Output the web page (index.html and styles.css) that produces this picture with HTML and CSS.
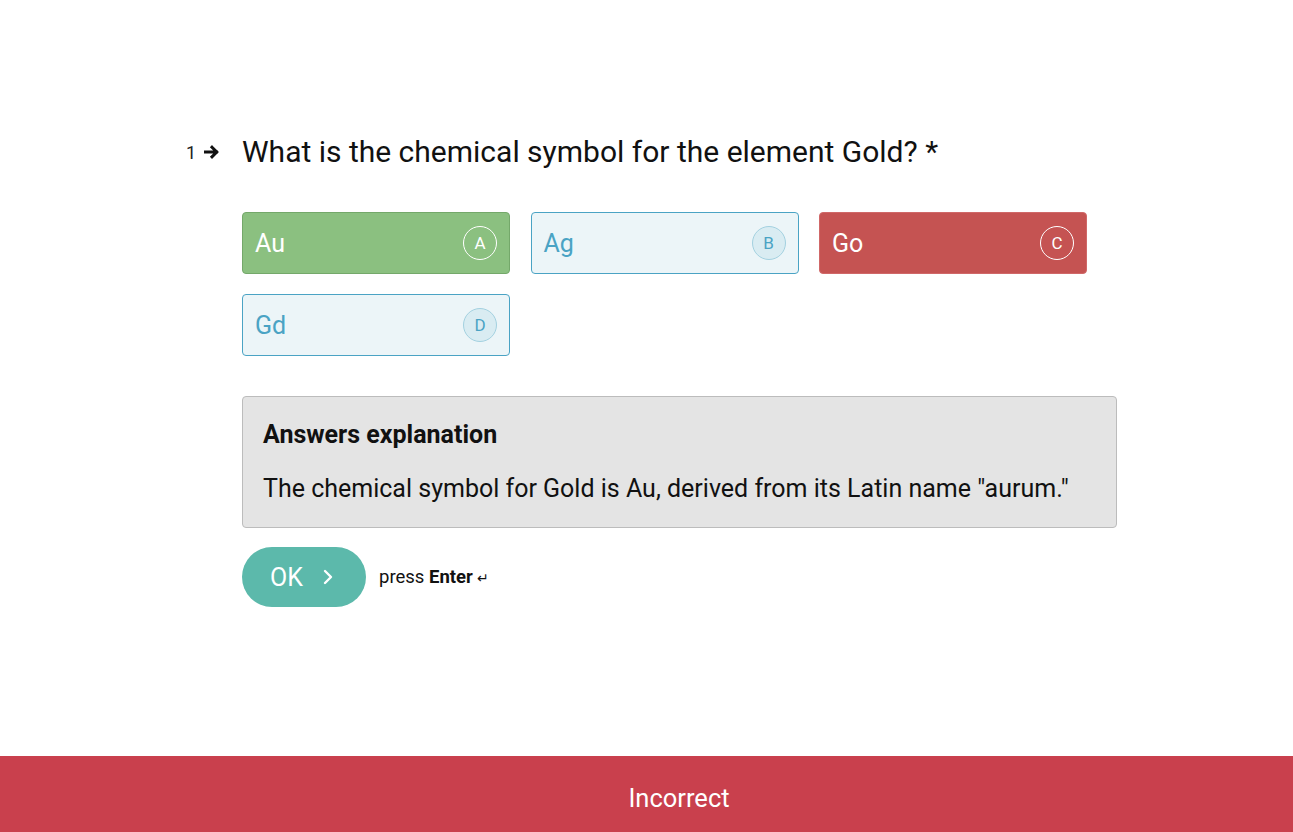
FILE: index.html
```html
<!DOCTYPE html>
<html>
<head>
<meta charset="utf-8">
<link rel="stylesheet" href="styles.css">
</head>
<body>
<div class="page">
  <main class="quiz">
    <div class="question">
      <div class="qnum"><span>1</span>
        <svg class="qarrow" width="16" height="14" viewBox="0 0 16 14"><path d="M1.5 7h11M8 2.2l4.8 4.8L8 11.8" fill="none" stroke="#111" stroke-width="3" stroke-linecap="square" stroke-linejoin="miter"/></svg>
      </div>
      <div class="qbody">
        <h1 class="qtext">What is the chemical symbol for the element Gold? *</h1>
        <div class="options">
          <div class="opt correct"><span class="label">Au</span><span class="key">A</span></div>
          <div class="opt"><span class="label">Ag</span><span class="key">B</span></div>
          <div class="opt wrong"><span class="label">Go</span><span class="key">C</span></div>
          <div class="opt"><span class="label">Gd</span><span class="key">D</span></div>
        </div>
        <section class="explain">
          <h2 class="explain-title">Answers explanation</h2>
          <p class="explain-text">The chemical symbol for Gold is Au, derived from its Latin name "aurum."</p>
        </section>
        <div class="actions">
          <button class="ok">OK
            <svg width="12" height="18" viewBox="0 0 12 18"><path d="M3 3l6 6-6 6" fill="none" stroke="#fff" stroke-width="2.4" stroke-linecap="round" stroke-linejoin="round"/></svg>
          </button>
          <span class="hint">press <b>Enter</b> <span class="ret">↵</span></span>
        </div>
      </div>
    </div>
  </main>
  <footer class="result">Incorrect</footer>
</div>
</body>
</html>
```
FILE: styles.css
```css
* { box-sizing: border-box; }
html, body { margin: 0; padding: 0; }
body {
  font-family: Roboto, "Liberation Sans", sans-serif;
  color: #111;
  background: #fff;
}
.page {
  height: 832px;
  display: flex;
  flex-direction: column;
}
.quiz {
  flex: 1;
  padding-top: 134px;
}
.question {
  display: flex;
  padding-left: 186px;
}
.qnum {
  width: 56px;
  display: flex;
  align-items: center;
  gap: 8px;
  height: 36px;
  font-size: 18px;
  color: #222;
}
.qarrow { display: block; }
.qbody { width: 875px; }
.qtext {
  margin: 0;
  font-size: 30px;
  font-weight: 400;
  line-height: 36px;
  color: #111;
}
.options {
  margin-top: 42px;
  display: grid;
  grid-template-columns: repeat(3, 268px);
  column-gap: 20.5px;
  row-gap: 20px;
}
.opt {
  height: 62px;
  border: 1px solid #4aa3c4;
  border-radius: 4px;
  background: #ecf5f8;
  color: #4aa3c4;
  display: flex;
  align-items: center;
  justify-content: space-between;
  padding: 0 12px 0 12px;
}
.label { font-size: 25px; }
.key {
  width: 34px;
  height: 34px;
  border-radius: 50%;
  border: 1px solid #a3d1e0;
  background: #d9ecf2;
  display: flex;
  align-items: center;
  justify-content: center;
  font-size: 17px;
}
.opt.correct {
  background: #8bc080;
  border-color: #74a86a;
  color: #fff;
}
.opt.wrong {
  background: #c55352;
  border-color: #d06868;
  color: #fff;
}
.opt.correct .key, .opt.wrong .key {
  background: transparent;
  border-color: #fff;
}
.explain {
  margin-top: 40px;
  background: #e4e4e4;
  border: 1px solid #bcbcbc;
  border-radius: 4px;
  padding: 23px 20px 23px;
}
.explain-title {
  margin: 0;
  font-size: 25px;
  font-weight: 700;
  line-height: 30px;
  color: #111;
}
.explain-text {
  margin: 24px 0 0;
  font-size: 25px;
  line-height: 30px;
  color: #111;
}
.actions {
  margin-top: 19px;
  display: flex;
  align-items: center;
  gap: 13px;
}
.ok {
  height: 60px;
  width: 124px;
  border: none;
  border-radius: 30px;
  background: #5cb9ab;
  color: #fff;
  font-family: Roboto, "Liberation Sans", sans-serif;
  font-size: 25px;
  display: flex;
  align-items: center;
  justify-content: center;
  gap: 19px;
  padding: 0 4px 0 0;
}
.ok svg { display: block; }
.hint {
  font-size: 18.5px;
  color: #111;
}
.hint b { font-weight: 700; }
.ret { font-size: 14px; }
.result {
  height: 76px;
  background: #c9404d;
  color: #fff;
  font-size: 25.5px;
  display: flex;
  align-items: center;
  justify-content: center;
  padding: 8px 0 0 65px;
}
```
